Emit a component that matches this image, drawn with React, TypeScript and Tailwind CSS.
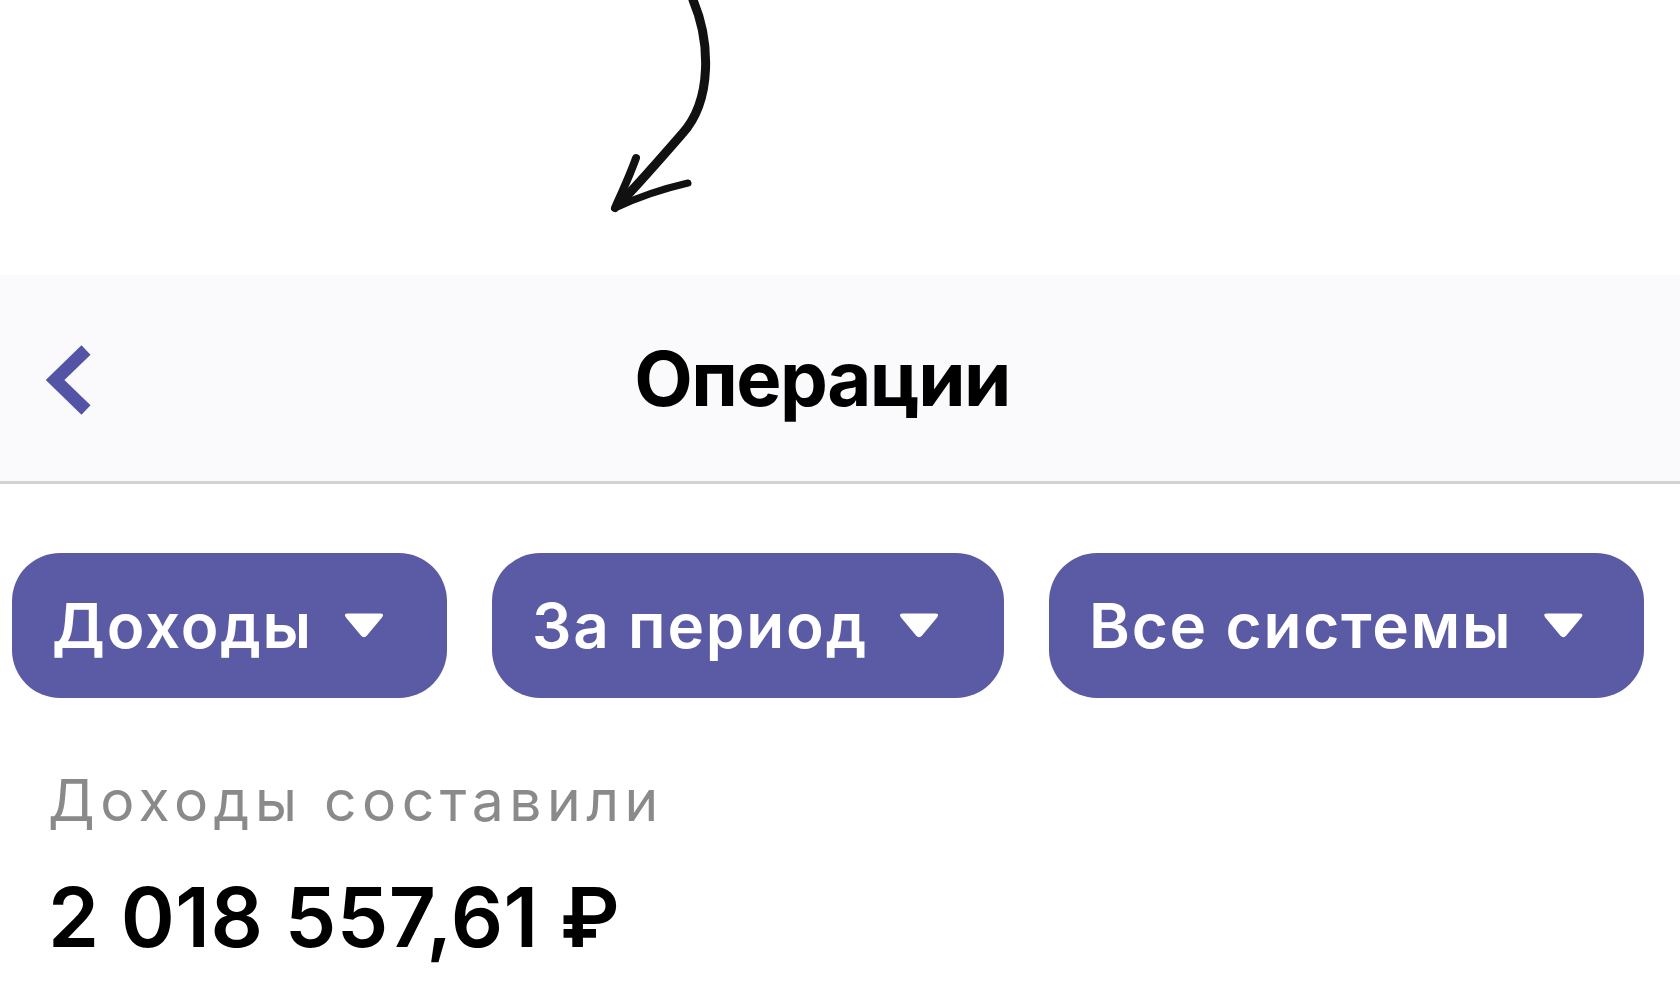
import React from "react";

const filters = [
  { label: "Доходы", width: "w-[435px]" },
  { label: "За период", width: "w-[512px]" },
  { label: "Все системы", width: "w-[595px]" },
];

function Caret() {
  return (
    <span className="block shrink-0 w-[42px] h-[28px] bg-white [clip-path:path('M5_2H37Q42_2_39_6L24_24Q21_27.5_18_24L3_6Q0_2_5_2Z')]" />
  );
}

function HandArrow() {
  return (
    <svg width="130" height="225" viewBox="0 0 130 225" fill="none">
      <path d="M93 0 C110 40 113 100 82 134 C62 157 42 180 22 201" stroke="#111" strokeWidth="9" strokeLinecap="round" />
      <path d="M36 158 C30 175 22 192 15 208" stroke="#111" strokeWidth="8" strokeLinecap="round" />
      <path d="M15 208 C38 197 62 189 88 183" stroke="#111" strokeWidth="7" strokeLinecap="round" />
    </svg>
  );
}

export default function App() {
  return (
    <div className="w-[1680px] h-[985px] overflow-hidden bg-white font-['Inter',sans-serif]">
      {/* annotation */}
      <div className="h-[275px] pl-[600px]">
        <HandArrow />
      </div>

      {/* Header */}
      <header className="h-[209px] bg-[#fafafc] border-b-[3px] border-[#d2d2d4] grid grid-cols-[1fr_auto_1fr] items-center pr-[36px]">
        <div className="pl-[46px] pt-[4px] flex items-center">
          <svg width="46" height="70" viewBox="0 0 46 70">
            <polyline points="40,5 9,35 40,65" fill="none" stroke="#5354a6" strokeWidth="13" />
          </svg>
        </div>
        <h1 className="text-[76px] font-bold text-black tracking-[-1.5px] leading-none">Операции</h1>
        <div />
      </header>

      {/* Filters */}
      <div className="flex gap-[45px] pl-[12px] mt-[69px]">
        {filters.map((f) => (
          <button
            key={f.label}
            className={`${f.width} h-[145px] rounded-[48px] bg-[#5a5ba4] flex items-center gap-[30px] pl-[40px] text-white text-[62px] font-semibold tracking-[1.8px] leading-none`}
          >
            <span>{f.label}</span>
            <Caret />
          </button>
        ))}
      </div>

      {/* Total */}
      <div className="pl-[48px] mt-[74px]">
        <p className="text-[57px] font-normal text-[#8a8a8a] tracking-[5.5px] leading-none">Доходы составили</p>
        <p className="mt-[48px] text-[82px] font-semibold text-black tracking-[0.5px] leading-none">2 018 557,61 ₽</p>
      </div>
    </div>
  );
}
